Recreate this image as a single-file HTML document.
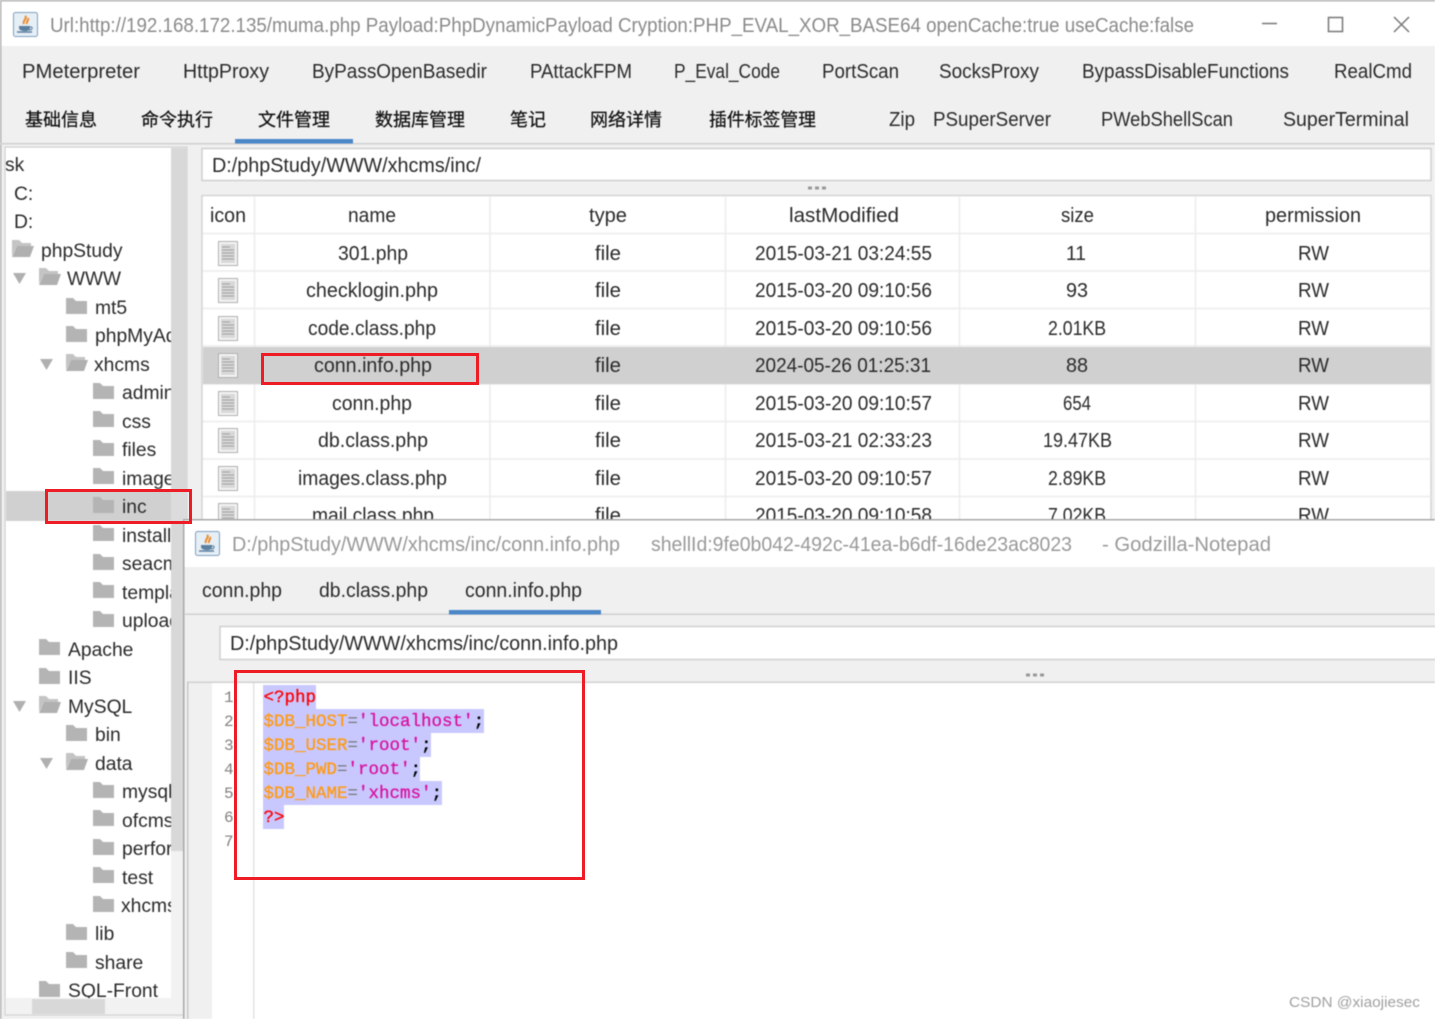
<!DOCTYPE html>
<html><head><meta charset="utf-8"><title>Godzilla</title>
<style>
html,body{margin:0;padding:0;background:#fff;width:1435px;height:1019px;overflow:hidden}
svg{display:block}
text{font-family:"Liberation Sans","Noto Sans CJK SC",sans-serif;font-size:20px;fill:#2a2a2a;white-space:pre}
.tree text{font-size:19.3px}
.cjk{font-size:18px;fill:#111;stroke:#111;stroke-width:.25px}
.tt{fill:#8a8a8a}
.code text,.code{font-family:"Liberation Mono",monospace;font-size:17.5px;stroke-width:.3px}
.code tspan,.code text{paint-order:stroke}
.ln{font-family:"Liberation Mono",monospace;font-size:16px;fill:#808080}
.soft{filter:blur(.4px)}
</style></head><body>
<svg width="1435" height="1019" viewBox="0 0 1435 1019" xmlns="http://www.w3.org/2000/svg">
<defs>
<clipPath id="treeclip"><rect x="6" y="149" width="165" height="849"/></clipPath>
<clipPath id="tblclip"><rect x="203" y="196" width="1228" height="323"/></clipPath>
<g id="cf"><path d="M0 16V0h7l3 3h11v13z" fill="#b4b4b4"/></g>
<g id="of"><path d="M0 16V0h7l3 3h9v3H5z" fill="#c4c4c4"/><path d="M0 17L5 6h17l-4 11z" fill="#b0b0b0"/></g>
<g id="fi"><rect x="0.5" y="0.5" width="19" height="24" fill="#f4f4f4" stroke="#b0b0b0"/><rect x="3" y="3" width="14" height="19" fill="#d8d8d8"/><path d="M4 6h8M4 9h12M4 12h12M4 15h12M4 18h12" stroke="#a0a0a0" stroke-width="1"/></g>
<g id="ji"><rect x="0.5" y="0.5" width="24" height="24" rx="2" fill="#e6eef6" stroke="#7f9fc0"/><path d="M12 4c3 2-3 5-1 8 M15 6c1 2-2 4-1 6" stroke="#ee8a2a" stroke-width="2" fill="none"/><path d="M6 14h11v2c0 2-2 3-5 3s-6-1-6-3z" fill="#5b7f9f"/><path d="M17 15c3-1 3 3-1 3" stroke="#5b7f9f" fill="none"/><path d="M4 20h15" stroke="#5b7f9f" stroke-width="1.5"/></g>
</defs>

<g class="soft">
<!-- window -->
<rect width="1435" height="1019" fill="#f0f0f0"/>
<rect x="0" y="0" width="1435" height="46" fill="#fff"/>
<rect x="0" y="0" width="1435" height="1.5" fill="#b4b4b4"/>
<rect x="0" y="0" width="1.5" height="1019" fill="#b4b4b4"/>
<use href="#ji" x="13" y="12"/>
<text class="tt" x="50" y="32" textLength="1144" lengthAdjust="spacingAndGlyphs">Url:http://192.168.172.135/muma.php Payload:PhpDynamicPayload Cryption:PHP_EVAL_XOR_BASE64 openCache:true useCache:false</text>
<path d="M1262 23.500h15" stroke="#777" stroke-width="1.500"/>
<rect x="1328.500" y="17.500" width="14" height="14" fill="none" stroke="#777" stroke-width="1.500"/>
<path d="M1394 17l15 15M1409 17l-15 15" stroke="#777" stroke-width="1.500"/>

<!-- toolbar rows -->
<text x="22" y="78" textLength="118" lengthAdjust="spacingAndGlyphs">PMeterpreter</text>
<text x="183" y="78" textLength="86" lengthAdjust="spacingAndGlyphs">HttpProxy</text>
<text x="312" y="78" textLength="175" lengthAdjust="spacingAndGlyphs">ByPassOpenBasedir</text>
<text x="530" y="78" textLength="102" lengthAdjust="spacingAndGlyphs">PAttackFPM</text>
<text x="674" y="78" textLength="106" lengthAdjust="spacingAndGlyphs">P_Eval_Code</text>
<text x="822" y="78" textLength="77" lengthAdjust="spacingAndGlyphs">PortScan</text>
<text x="939" y="78" textLength="100" lengthAdjust="spacingAndGlyphs">SocksProxy</text>
<text x="1082" y="78" textLength="207" lengthAdjust="spacingAndGlyphs">BypassDisableFunctions</text>
<text x="1334" y="78" textLength="78" lengthAdjust="spacingAndGlyphs">RealCmd</text>

<text class="cjk" x="25" y="126" textLength="72" lengthAdjust="spacingAndGlyphs">基础信息</text>
<text class="cjk" x="141" y="126" textLength="72" lengthAdjust="spacingAndGlyphs">命令执行</text>
<text class="cjk" x="258" y="126" textLength="72" lengthAdjust="spacingAndGlyphs">文件管理</text>
<text class="cjk" x="375" y="126" textLength="90" lengthAdjust="spacingAndGlyphs">数据库管理</text>
<text class="cjk" x="510" y="126" textLength="36" lengthAdjust="spacingAndGlyphs">笔记</text>
<text class="cjk" x="590" y="126" textLength="72" lengthAdjust="spacingAndGlyphs">网络详情</text>
<text class="cjk" x="709" y="126" textLength="107" lengthAdjust="spacingAndGlyphs">插件标签管理</text>
<text x="889" y="126" textLength="26" lengthAdjust="spacingAndGlyphs">Zip</text>
<text x="933" y="126" textLength="118" lengthAdjust="spacingAndGlyphs">PSuperServer</text>
<text x="1101" y="126" textLength="132" lengthAdjust="spacingAndGlyphs">PWebShellScan</text>
<text x="1283" y="126" textLength="126" lengthAdjust="spacingAndGlyphs">SuperTerminal</text>
<rect x="0" y="143" width="1435" height="1.500" fill="#d0d0d0"/>
<rect x="235" y="139" width="118" height="4.500" fill="#4a86c8"/>

<!-- tree panel -->
<rect x="5" y="147" width="182" height="868" fill="#f2f2f2" stroke="#cfcfcf"/>
<rect x="6" y="148" width="165" height="850" fill="#fff"/>
<rect x="171" y="148" width="16" height="703" fill="#d8d8d8"/>
<rect x="6" y="491" width="165" height="30" fill="#d0d0d0"/>
<rect x="171" y="491" width="16" height="30" fill="#dcdcdc"/>
<rect x="32" y="999" width="73" height="15" fill="#d8d8d8"/>
<g class="tree" clip-path="url(#treeclip)">
<text x="5" y="171">sk</text>
<text x="14" y="200">C:</text>
<text x="14" y="228">D:</text>
<use href="#of" x="12" y="240"/><text x="41" y="257">phpStudy</text>
<path d="M13 273h13l-6.500 11z" fill="#b0b0b0"/><use href="#of" x="39" y="268"/><text x="67" y="285" textLength="54" lengthAdjust="spacingAndGlyphs">WWW</text>
<use href="#cf" x="66" y="298"/><text x="95" y="314">mt5</text>
<use href="#cf" x="66" y="326"/><text x="95" y="342">phpMyAdmin</text>
<path d="M40 359h13l-6.500 11z" fill="#b0b0b0"/><use href="#of" x="66" y="354"/><text x="94" y="371">xhcms</text>
<use href="#cf" x="93" y="383"/><text x="122" y="399">admin</text>
<use href="#cf" x="93" y="411"/><text x="122" y="428">css</text>
<use href="#cf" x="93" y="440"/><text x="122" y="456">files</text>
<use href="#cf" x="93" y="468"/><text x="122" y="485">images</text>
<use href="#cf" x="93" y="497"/><text x="122" y="513">inc</text>
<use href="#cf" x="93" y="525"/><text x="122" y="542">install</text>
<use href="#cf" x="93" y="554"/><text x="122" y="570">seacms</text>
<use href="#cf" x="93" y="582"/><text x="122" y="599">template</text>
<use href="#cf" x="93" y="611"/><text x="122" y="627">uploads</text>
<use href="#cf" x="39" y="639"/><text x="68" y="656">Apache</text>
<use href="#cf" x="39" y="668"/><text x="68" y="684">IIS</text>
<path d="M13 701h13l-6.500 11z" fill="#b0b0b0"/><use href="#of" x="39" y="696"/><text x="68" y="713">MySQL</text>
<use href="#cf" x="66" y="725"/><text x="95" y="741">bin</text>
<path d="M40 758h13l-6.500 11z" fill="#b0b0b0"/><use href="#of" x="66" y="753"/><text x="95" y="770">data</text>
<use href="#cf" x="93" y="782"/><text x="122" y="798">mysql</text>
<use href="#cf" x="93" y="810"/><text x="122" y="827">ofcms</text>
<use href="#cf" x="93" y="839"/><text x="122" y="855">perfor</text>
<use href="#cf" x="93" y="867"/><text x="122" y="884">test</text>
<use href="#cf" x="93" y="896"/><text x="121" y="912">xhcms</text>
<use href="#cf" x="66" y="924"/><text x="95" y="940">lib</text>
<use href="#cf" x="66" y="952"/><text x="95" y="969">share</text>
<use href="#cf" x="39" y="981"/><text x="68" y="997">SQL-Front</text>
</g>

<!-- path field -->
<rect x="202" y="148.500" width="1229" height="32" fill="#fff" stroke="#d0d0d0" stroke-width="1.500"/>
<text x="212" y="172" textLength="269" lengthAdjust="spacingAndGlyphs">D:/phpStudy/WWW/xhcms/inc/</text>
<path d="M808 188h4M815 188h4M822 188h4" stroke="#999" stroke-width="3"/>

<!-- table -->
<rect x="202" y="195.500" width="1229" height="325" fill="#fff" stroke="#d4d4d4" stroke-width="1.500"/>
<g stroke="#ececec" stroke-width="1.500">
<path d="M203 233.500H1431M203 271H1431M203 308.500H1431M203 346H1431M203 384H1431M203 421.500H1431M203 459H1431M203 496.500H1431"/>
<path d="M254.500 197V519M490 197V519M725.500 197V519M959.500 197V519M1195.500 197V519"/>
</g>
<rect x="203" y="347" width="1228" height="37" fill="#d0d0d0"/>
<text x="210" y="222" textLength="36" lengthAdjust="spacingAndGlyphs">icon</text>
<text x="348" y="222" textLength="48" lengthAdjust="spacingAndGlyphs">name</text>
<text x="589" y="222" textLength="38" lengthAdjust="spacingAndGlyphs">type</text>
<text x="789" y="222" textLength="110" lengthAdjust="spacingAndGlyphs">lastModified</text>
<text x="1061" y="222" textLength="33" lengthAdjust="spacingAndGlyphs">size</text>
<text x="1265" y="222" textLength="96" lengthAdjust="spacingAndGlyphs">permission</text>
<g clip-path="url(#tblclip)">
<use href="#fi" x="218" y="241"/><use href="#fi" x="218" y="278"/><use href="#fi" x="218" y="316"/><use href="#fi" x="218" y="353"/><use href="#fi" x="218" y="391"/><use href="#fi" x="218" y="428"/><use href="#fi" x="218" y="466"/><use href="#fi" x="218" y="503"/>
<text x="338" y="260" textLength="70" lengthAdjust="spacingAndGlyphs">301.php</text>
<text x="306" y="297" textLength="132" lengthAdjust="spacingAndGlyphs">checklogin.php</text>
<text x="308" y="335" textLength="128" lengthAdjust="spacingAndGlyphs">code.class.php</text>
<text x="314" y="372" textLength="118" lengthAdjust="spacingAndGlyphs">conn.info.php</text>
<text x="332" y="410" textLength="80" lengthAdjust="spacingAndGlyphs">conn.php</text>
<text x="318" y="447" textLength="110" lengthAdjust="spacingAndGlyphs">db.class.php</text>
<text x="298" y="485" textLength="149" lengthAdjust="spacingAndGlyphs">images.class.php</text>
<text x="312" y="522" textLength="122" lengthAdjust="spacingAndGlyphs">mail.class.php</text>
<text x="595" y="260" textLength="26" lengthAdjust="spacingAndGlyphs">file</text>
<text x="595" y="297" textLength="26" lengthAdjust="spacingAndGlyphs">file</text>
<text x="595" y="335" textLength="26" lengthAdjust="spacingAndGlyphs">file</text>
<text x="595" y="372" textLength="26" lengthAdjust="spacingAndGlyphs">file</text>
<text x="595" y="410" textLength="26" lengthAdjust="spacingAndGlyphs">file</text>
<text x="595" y="447" textLength="26" lengthAdjust="spacingAndGlyphs">file</text>
<text x="595" y="485" textLength="26" lengthAdjust="spacingAndGlyphs">file</text>
<text x="595" y="522" textLength="26" lengthAdjust="spacingAndGlyphs">file</text>
<text x="755" y="260" textLength="177" lengthAdjust="spacingAndGlyphs">2015-03-21 03:24:55</text>
<text x="755" y="297" textLength="177" lengthAdjust="spacingAndGlyphs">2015-03-20 09:10:56</text>
<text x="755" y="335" textLength="177" lengthAdjust="spacingAndGlyphs">2015-03-20 09:10:56</text>
<text x="755" y="372" textLength="176" lengthAdjust="spacingAndGlyphs">2024-05-26 01:25:31</text>
<text x="755" y="410" textLength="177" lengthAdjust="spacingAndGlyphs">2015-03-20 09:10:57</text>
<text x="755" y="447" textLength="177" lengthAdjust="spacingAndGlyphs">2015-03-21 02:33:23</text>
<text x="755" y="485" textLength="177" lengthAdjust="spacingAndGlyphs">2015-03-20 09:10:57</text>
<text x="755" y="522" textLength="177" lengthAdjust="spacingAndGlyphs">2015-03-20 09:10:58</text>
<text x="1066" y="260" textLength="20" lengthAdjust="spacingAndGlyphs">11</text>
<text x="1066" y="297" textLength="22" lengthAdjust="spacingAndGlyphs">93</text>
<text x="1048" y="335" textLength="58" lengthAdjust="spacingAndGlyphs">2.01KB</text>
<text x="1066" y="372" textLength="22" lengthAdjust="spacingAndGlyphs">88</text>
<text x="1063" y="410" textLength="28" lengthAdjust="spacingAndGlyphs">654</text>
<text x="1043" y="447" textLength="69" lengthAdjust="spacingAndGlyphs">19.47KB</text>
<text x="1048" y="485" textLength="58" lengthAdjust="spacingAndGlyphs">2.89KB</text>
<text x="1048" y="522" textLength="58" lengthAdjust="spacingAndGlyphs">7.02KB</text>
<text x="1298" y="260" textLength="31" lengthAdjust="spacingAndGlyphs">RW</text>
<text x="1298" y="297" textLength="31" lengthAdjust="spacingAndGlyphs">RW</text>
<text x="1298" y="335" textLength="31" lengthAdjust="spacingAndGlyphs">RW</text>
<text x="1298" y="372" textLength="31" lengthAdjust="spacingAndGlyphs">RW</text>
<text x="1298" y="410" textLength="31" lengthAdjust="spacingAndGlyphs">RW</text>
<text x="1298" y="447" textLength="31" lengthAdjust="spacingAndGlyphs">RW</text>
<text x="1298" y="485" textLength="31" lengthAdjust="spacingAndGlyphs">RW</text>
<text x="1298" y="522" textLength="31" lengthAdjust="spacingAndGlyphs">RW</text>
</g>

<!-- notepad window -->
<rect x="183" y="519" width="1252" height="500" fill="#f0f0f0"/>
<rect x="183" y="519" width="1252" height="1.500" fill="#a8a8a8"/>
<rect x="183" y="519" width="1.500" height="500" fill="#a8a8a8"/>
<rect x="184.500" y="520.500" width="1251" height="46.500" fill="#fff"/>
<use href="#ji" x="195" y="531"/>
<text x="232" y="551" textLength="388" lengthAdjust="spacingAndGlyphs" style="fill:#999">D:/phpStudy/WWW/xhcms/inc/conn.info.php</text>
<text x="651" y="551" textLength="421" lengthAdjust="spacingAndGlyphs" style="fill:#999">shellId:9fe0b042-492c-41ea-b6df-16de23ac8023</text>
<text x="1102" y="551" textLength="169" lengthAdjust="spacingAndGlyphs" style="fill:#999">- Godzilla-Notepad</text>
<text x="202" y="597" textLength="80" lengthAdjust="spacingAndGlyphs">conn.php</text>
<text x="319" y="597" textLength="109" lengthAdjust="spacingAndGlyphs">db.class.php</text>
<text x="465" y="597" textLength="117" lengthAdjust="spacingAndGlyphs">conn.info.php</text>
<rect x="184" y="613.500" width="1251" height="1.500" fill="#d0d0d0"/>
<rect x="449" y="610" width="152" height="4.500" fill="#4a86c8"/>
<rect x="220" y="626.500" width="1220" height="33" fill="#fff" stroke="#d0d0d0" stroke-width="1.500"/>
<text x="230" y="650" textLength="388" lengthAdjust="spacingAndGlyphs">D:/phpStudy/WWW/xhcms/inc/conn.info.php</text>
<path d="M1026 675h4M1033 675h4M1040 675h4" stroke="#999" stroke-width="3"/>

<!-- editor -->
<rect x="187" y="682" width="1248" height="337" fill="#fff"/>
<rect x="187" y="682" width="25" height="337" fill="#f0f0f0"/>
<rect x="187" y="681.500" width="1248" height="1.500" fill="#d0d0d0"/>
<rect x="187" y="681.500" width="1.500" height="338" fill="#c8c8c8"/>
<rect x="253" y="683" width="1.500" height="336" fill="#e4e4e4"/>
<g fill="#c8c8ff">
<rect x="263" y="685" width="53" height="24"/>
<rect x="263" y="709" width="221" height="24"/>
<rect x="263" y="733" width="168" height="24"/>
<rect x="263" y="757" width="157" height="24"/>
<rect x="263" y="781" width="179" height="24"/>
<rect x="263" y="805" width="21" height="24"/>
</g>
<text class="ln" x="224" y="702">1</text>
<text class="ln" x="224" y="726">2</text>
<text class="ln" x="224" y="750">3</text>
<text class="ln" x="224" y="774">4</text>
<text class="ln" x="224" y="798">5</text>
<text class="ln" x="224" y="822">6</text>
<text class="ln" x="224" y="846">7</text>
<g class="code">
<text x="263.500" y="702" style="fill:#f00;stroke:#f00">&lt;?php</text>
<text x="263.500" y="726"><tspan style="fill:#ff9a14;stroke:#ff9a14">$DB_HOST</tspan><tspan style="fill:#777">=</tspan><tspan style="fill:#d9109f;stroke:#d9109f">'localhost'</tspan><tspan style="fill:#000;font-weight:bold">;</tspan></text>
<text x="263.500" y="750"><tspan style="fill:#ff9a14;stroke:#ff9a14">$DB_USER</tspan><tspan style="fill:#777">=</tspan><tspan style="fill:#d9109f;stroke:#d9109f">'root'</tspan><tspan style="fill:#000;font-weight:bold">;</tspan></text>
<text x="263.500" y="774"><tspan style="fill:#ff9a14;stroke:#ff9a14">$DB_PWD</tspan><tspan style="fill:#777">=</tspan><tspan style="fill:#d9109f;stroke:#d9109f">'root'</tspan><tspan style="fill:#000;font-weight:bold">;</tspan></text>
<text x="263.500" y="798"><tspan style="fill:#ff9a14;stroke:#ff9a14">$DB_NAME</tspan><tspan style="fill:#777">=</tspan><tspan style="fill:#d9109f;stroke:#d9109f">'xhcms'</tspan><tspan style="fill:#000;font-weight:bold">;</tspan></text>
<text x="263.500" y="822" style="fill:#f00;stroke:#f00">?&gt;</text>
</g>
<text x="1289" y="1007" textLength="131" lengthAdjust="spacingAndGlyphs" style="font-size:15px;fill:#a0a0a0">CSDN @xiaojiesec</text>
</g>

<!-- red annotation boxes -->
<g fill="none" stroke="#ee1c25" stroke-width="3">
<rect x="262.500" y="354.500" width="215" height="29"/>
<rect x="46.500" y="490.500" width="144" height="32"/>
<rect x="235.500" y="671.500" width="348" height="207"/>
</g>
</svg>
</body></html>
